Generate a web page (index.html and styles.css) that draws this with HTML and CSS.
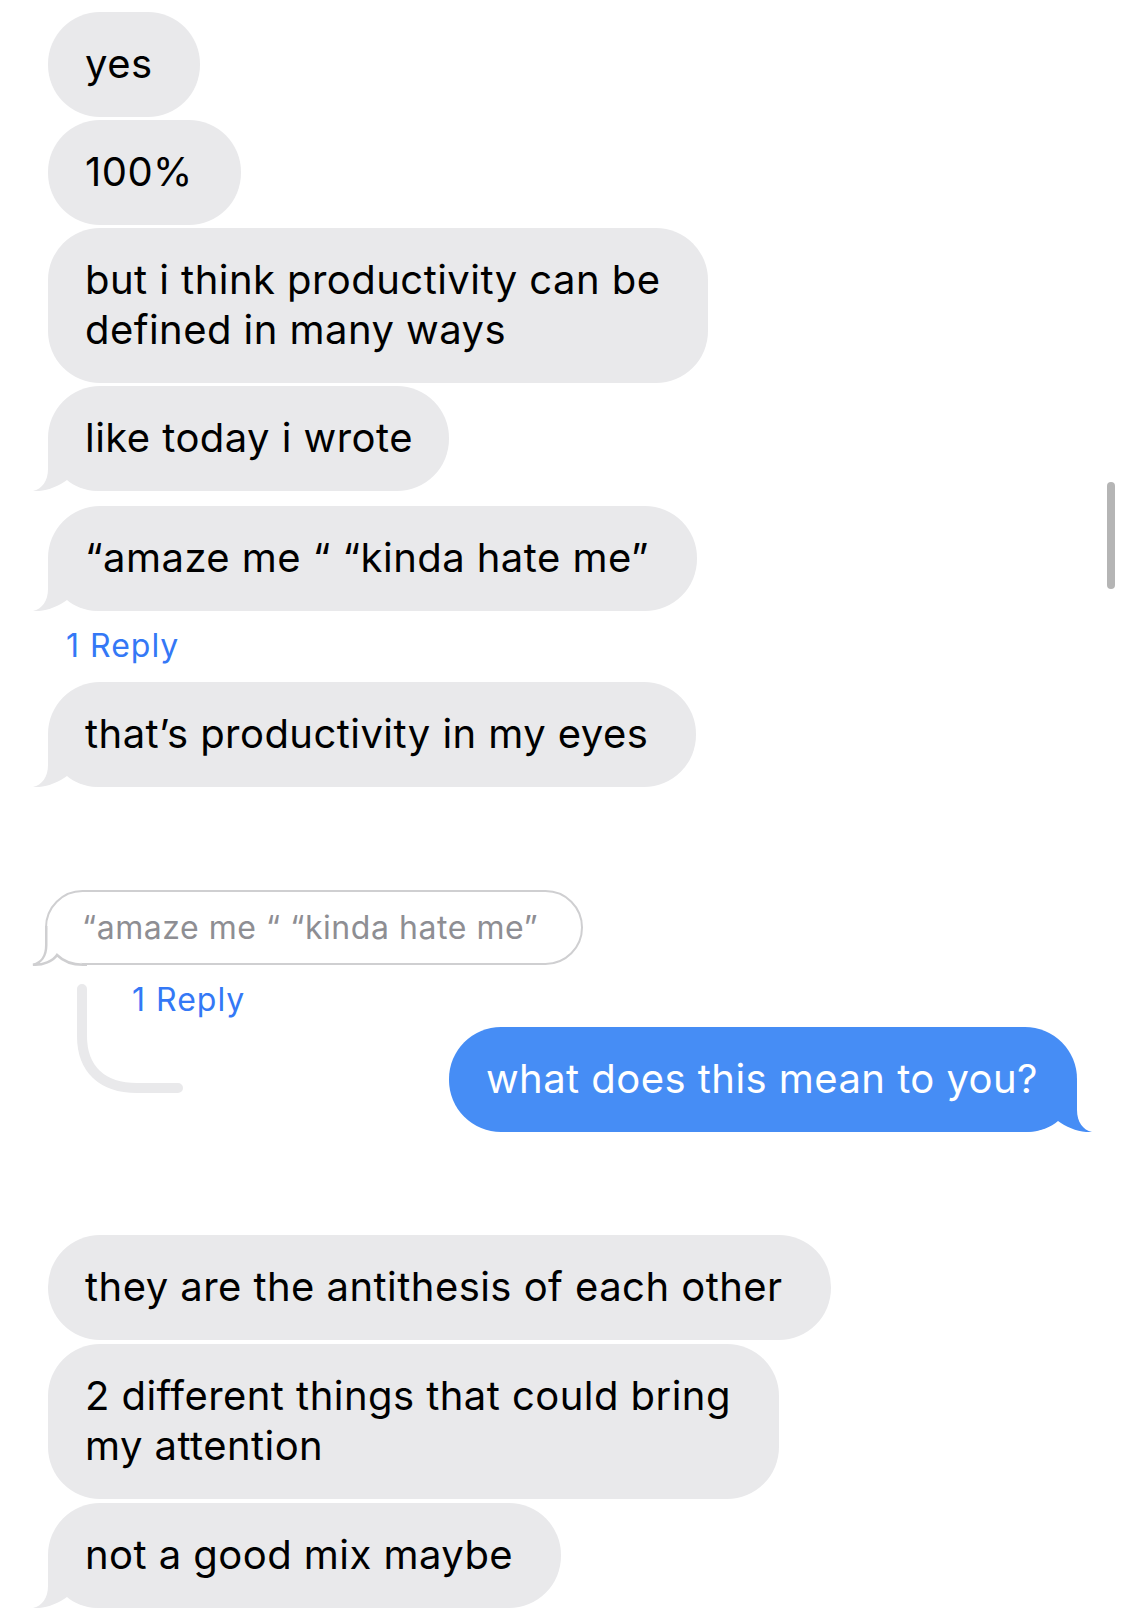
FILE: index.html
```html
<!DOCTYPE html>
<html lang="en">
<head>
<meta charset="utf-8">
<title>Messages</title>
<link rel="stylesheet" href="styles.css">
</head>
<body>
<div class="screen">
  <div class="row"><div class="bubble"><span class="txt">yes</span></div></div>
  <div class="row gap-tight"><div class="bubble"><span class="txt">100%</span></div></div>
  <div class="row gap-tight"><div class="bubble"><span class="txt">but i think productivity can be<br>defined in many ways</span></div></div>
  <div class="row gap-tight"><div class="bubble snug"><svg class="tail" viewBox="0 0 72 52" width="72" height="52"><path d="M16 0 L16 30 C16 42 10 50 1 52 C12 53 26 48 35 41 C42 47 52 52 68 52 Z"/></svg><span class="txt">like today i wrote</span></div></div>
  <div class="row gap-tail"><div class="bubble"><svg class="tail" viewBox="0 0 72 52" width="72" height="52"><path d="M16 0 L16 30 C16 42 10 50 1 52 C12 53 26 48 35 41 C42 47 52 52 68 52 Z"/></svg><span class="txt">“amaze me “ “kinda hate me”</span></div></div>
  <div class="reply-link gap-tail">1 Reply</div>
  <div class="row gap-reply"><div class="bubble"><svg class="tail" viewBox="0 0 72 52" width="72" height="52"><path d="M16 0 L16 30 C16 42 10 50 1 52 C12 53 26 48 35 41 C42 47 52 52 68 52 Z"/></svg><span class="txt">that’s productivity in my eyes</span></div></div>

  <div class="row gap-section quoted-row">
    <div class="quote">
      <svg class="qtail" viewBox="0 0 56 40" width="56" height="40">
        <path class="qfill" d="M15.25 2 L15.25 19 C15.25 30 10 37 2 38.75 C12 39.5 22 35 26 29 C32 35 40 38.75 52 38.75 Z"/>
        <path class="qline" d="M15.25 0 L15.25 19 C15.25 30 10 37 2 38.75 C12 39.5 22 35 26 29 C32 35 40 38.75 52 38.75 L56 38.75"/>
      </svg>
      <span class="txt">“amaze me “ “kinda hate me”</span>
    </div>
  </div>
  <div class="thread gap-tail">
    <svg class="thread-line" viewBox="0 0 110 112" width="110" height="112"><path d="M5 5 L5 52 C5 85 25 104 60 104 L101 104"/></svg>
    <div class="reply-link indent">1 Reply</div>
  </div>
  <div class="row out gap-out"><div class="bubble sent"><svg class="tail" viewBox="0 0 72 52" width="72" height="52"><path d="M16 0 L16 30 C16 42 10 50 1 52 C12 53 26 48 35 41 C42 47 52 52 68 52 Z"/></svg><span class="txt">what does this mean to you?</span></div></div>

  <div class="row gap-section"><div class="bubble"><span class="txt">they are the antithesis of each other</span></div></div>
  <div class="row gap-group"><div class="bubble"><span class="txt">2 different things that could bring<br>my attention</span></div></div>
  <div class="row gap-group"><div class="bubble"><svg class="tail" viewBox="0 0 72 52" width="72" height="52"><path d="M16 0 L16 30 C16 42 10 50 1 52 C12 53 26 48 35 41 C42 47 52 52 68 52 Z"/></svg><span class="txt">not a good mix maybe</span></div></div>

  <div class="scrollbar"></div>
</div>
</body>
</html>
```

FILE: styles.css
```css
html, body {
  margin: 0;
  padding: 0;
  background: #ffffff;
}

body {
  font-family: "Inter", "Noto Sans", "Liberation Sans", sans-serif;
  -webkit-font-smoothing: antialiased;
}

.screen {
  position: relative;
  width: 1125px;
  height: 1615px;
  overflow: hidden;
  box-sizing: border-box;
  padding-top: 12px;
  display: flex;
  flex-direction: column;
}

.row {
  display: flex;
  justify-content: flex-start;
  padding: 0 48px;
}

.row.out {
  justify-content: flex-end;
}

.gap-tight { margin-top: 3px; }
.gap-group { margin-top: 4px; }
.gap-tail { margin-top: 15px; }
.gap-reply { margin-top: 16px; }
.gap-section { margin-top: 103px; }
.gap-out { margin-top: 7px; }

.bubble {
  position: relative;
  background: #e9e9eb;
  color: #000000;
  font-size: 40px;
  line-height: 50px;
  letter-spacing: 0.45px;
  padding: 27px 48px 28px 37px;
  border-radius: 52px;
  white-space: nowrap;
}

.bubble.snug {
  padding-right: 36px;
}

.bubble .txt {
  position: relative;
  z-index: 1;
}

.tail {
  position: absolute;
  left: -16px;
  bottom: 0;
  z-index: 0;
  fill: #e9e9eb;
}

.bubble.sent {
  background: #468df5;
  color: #ffffff;
  padding: 27px 39px 28px 37px;
}

.bubble.sent .tail {
  left: auto;
  right: -16px;
  transform: scaleX(-1);
  fill: #468df5;
}

.reply-link {
  font-size: 32px;
  line-height: 40px;
  color: #3478f6;
  padding-left: 66px;
  letter-spacing: 1px;
}

.reply-link.indent {
  padding-left: 132px;
}

.quoted-row {
  padding-left: 45px;
}

.quote {
  position: relative;
  border: 2.5px solid #cfcfd1;
  border-radius: 38px;
  padding: 16px 43px 16px 35px;
  font-size: 32px;
  line-height: 39px;
  color: #8e8e93;
  letter-spacing: 0.55px;
  background: #ffffff;
  white-space: nowrap;
}

.quote .txt {
  position: relative;
  z-index: 1;
}

.qtail {
  position: absolute;
  left: -16.5px;
  bottom: -2.5px;
  z-index: 0;
  overflow: visible;
}

.qfill {
  fill: #ffffff;
}

.qline {
  fill: none;
  stroke: #cfcfd1;
  stroke-width: 2.5;
}

.thread {
  position: relative;
}

.thread-line {
  position: absolute;
  left: 77px;
  top: 4px;
  fill: none;
  stroke: #e9e9eb;
  stroke-width: 10;
  stroke-linecap: round;
  z-index: 0;
}

.scrollbar {
  position: absolute;
  left: 1107px;
  top: 482px;
  width: 8px;
  height: 107px;
  border-radius: 4px;
  background: #b5b5b5;
}
```
